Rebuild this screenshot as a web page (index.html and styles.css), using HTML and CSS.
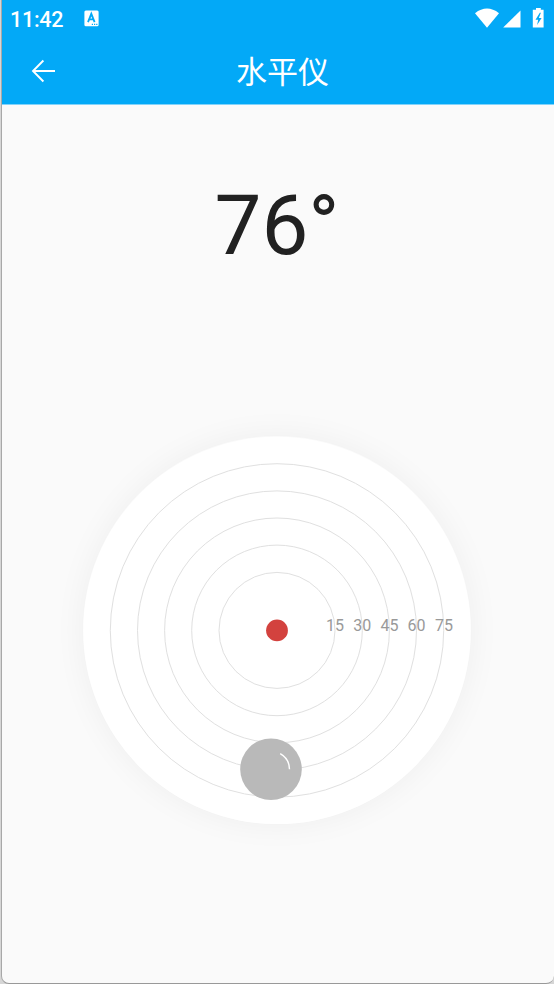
FILE: index.html
```html
<!DOCTYPE html>
<html lang="zh-CN">
<head>
<meta charset="utf-8">
<title>水平仪</title>
<link rel="stylesheet" href="styles.css">
</head>
<body>
<div class="window">
  <header class="header">
    <div class="status">
      <span class="time">11:42</span>
      <svg class="keyboard" width="15" height="17" viewBox="0 0 15 17"><rect x=".4" y=".5" width="14.2" height="15.7" rx="1.5" fill="#fff"/><path d="M4 12.2 7.3 3.8 10.6 12.2M5.2 9.4H9.4" fill="none" stroke="#03a9f7" stroke-width="1.8"/><path d="M7.8 14.4h1.2m1 0h1.2m1 0h1.2" stroke="#03a9f7" stroke-width="1.2"/></svg>
      <svg class="signals" width="70" height="22" viewBox="0 0 70 22"><path d="M0 5.2Q12-4 24 5.2L12 19.8Z" fill="#fff"/><path d="M45.5 2.6V19.5H28.2Z" fill="#fff"/><path d="M61 0h4.8v1.8h2.8V19.5H57.8V1.8H61Z" fill="#fff"/><path d="M64.8 4.8 60.5 11.8h2.7l-1.1 5.3 4.5-7h-2.8l2.1-5.3z" fill="#03a9f7"/></svg>
    </div>
    <div class="toolbar">
      <svg class="back" width="25" height="24" viewBox="0 0 25 24"><path d="M24 12H2M12.4 1.5 2 12 12.4 22.5" fill="none" stroke="#fff" stroke-width="1.9"/></svg>
      <h1 class="title">水平仪</h1>
    </div>
  </header>
  <main class="content">
    <div class="reading">76°</div>
    <div class="dial">
      <svg width="388" height="388" viewBox="-194 -194.4 388 388">
        <circle class="face" r="193.7"/>
        <g class="rings"><circle r="58"/><circle r="85.3"/><circle r="112.4"/><circle r="139.5"/><circle r="166.7"/></g>
        <g class="scale"><text x="58" y=".6">15</text><text x="85.3" y=".6">30</text><text x="112.4" y=".6">45</text><text x="139.4" y=".6">60</text><text x="167" y=".6">75</text></g>
        <circle class="center" r="10.9"/>
        <g transform="translate(-6 138.8)"><circle class="bubble" r="30.8"/><path class="shine" d="M9.2-15.6A18.3 18.3 0 0 1 18.5 0"/></g>
      </svg>
    </div>
  </main>
</div>
</body>
</html>
```
FILE: styles.css
```css
* { box-sizing: border-box; }
body {
  margin: 0;
  height: 984px;
  overflow: hidden;
  background: #d6d6d6;
  font-family: Roboto, "Noto Sans CJK SC", sans-serif;
}
.window {
  height: 984px;
  margin-left: 1px;
  border-left: 1px solid #a8a8a8;
  border-bottom: 1px solid #999;
  border-radius: 0 0 8px 8px;
  background: #fafafa;
  overflow: hidden;
}
.header {
  height: 105px;
  background: #03a9f7;
  color: #fff;
  border-bottom: 1px solid #82d3fa;
}
.status {
  display: flex;
  height: 38px;
  padding: 8px 9px 0 8px;
  align-items: flex-start;
}
.time {
  width: 54px;
  font-size: 21.5px;
  font-weight: 500;
  line-height: 24px;
  letter-spacing: -.25px;
}
.keyboard { margin: 2px 0 0 20px; }
.signals { margin-left: auto; }
.toolbar {
  display: grid;
  grid-template-columns: 62px 1fr 53px;
  height: 66px;
  align-items: center;
}
.back { margin-left: 29px; }
.title {
  margin: -2px 0 0;
  font: 400 31px/44px "Noto Sans CJK SC", sans-serif;
  text-align: center;
}
.reading {
  margin-top: 64px;
  height: 114px;
  padding-right: 2px;
  font-size: 83.5px;
  line-height: 114px;
  color: #212121;
  text-align: center;
}
.dial {
  width: 388px;
  height: 388px;
  margin: 153px auto 0 81px;
  border-radius: 50%;
  box-shadow: 0 0 32px rgba(0, 0, 0, .05);
}
.dial svg { display: block; overflow: visible; }
.face { fill: #fff; }
.rings { fill: none; stroke: #e0e0e0; stroke-width: 1; }
.scale { font-size: 16px; fill: #999; text-anchor: middle; }
.center { fill: #d3423e; }
.bubble { fill: #b9b9b9; }
.shine { fill: none; stroke: #fff; stroke-width: 1.4; }
```
